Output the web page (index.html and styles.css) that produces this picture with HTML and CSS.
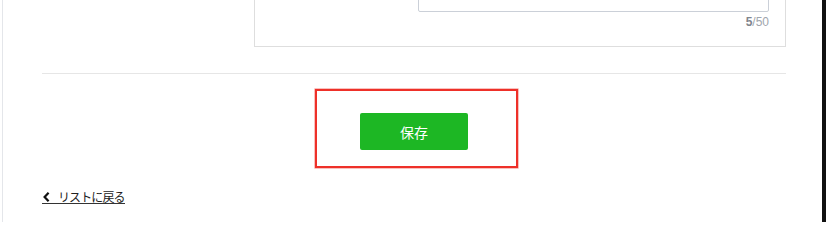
FILE: index.html
```html
<!DOCTYPE html>
<html lang="ja">
<head>
<meta charset="utf-8">
<link rel="stylesheet" href="styles.css">
</head>
<body>
<div class="page">
  <div class="main">
    <div class="card">
      <div class="field">
        <div class="input-box"></div>
        <div class="counter"><span class="count-now">5</span>/50</div>
      </div>
    </div>
    <hr class="divider">
    <div class="actions">
      <div class="action-wrap">
        <button class="save-btn" type="button">保存</button>
        <div class="highlight"></div>
      </div>
    </div>
    <div class="back">
      <a class="back-link" href="#"><svg class="chev" width="7" height="10" viewBox="0 0 7 10"><polyline points="5.6,0.8 1.6,5 5.6,9.2" fill="none" stroke="#111" stroke-width="2.2"/></svg><span class="back-text">リストに戻る</span></a>
    </div>
  </div>
  <div class="edge"></div>
</div>
</body>
</html>
```

FILE: styles.css
```css
html, body {
  margin: 0;
  padding: 0;
  background: #fff;
}
body {
  font-family: "Noto Sans CJK JP", "Noto Sans", sans-serif;
  color: #222;
}
.page {
  display: flex;
  height: 222px;
  overflow: hidden;
}
.main {
  flex: 1;
  margin-left: 2px;
  border-left: 1px solid #e4e6ea;
  padding: 0 36px 0 39px;
  display: flex;
  flex-direction: column;
}
.edge {
  width: 4px;
  background: #111;
}
.card {
  margin-top: -60px;
  margin-left: 212px;
  border: 1px solid #dedede;
  padding: 20px 16px 16px 163px;
}
.input-box {
  height: 49px;
  border: 1px solid #cbd0d8;
  border-radius: 2px;
}
.counter {
  margin-top: 2px;
  text-align: right;
  font-family: "Liberation Sans", Arial, sans-serif;
  font-size: 12px;
  line-height: 16px;
  color: #a0a5ad;
}
.count-now {
  color: #80858d;
  font-weight: bold;
}
.divider {
  margin: 26px 0 0;
  border: 0;
  border-top: 1px solid #e6e6e6;
  height: 0;
}
.actions {
  display: flex;
  justify-content: center;
  padding-top: 39px;
}
.action-wrap {
  position: relative;
}
.save-btn {
  display: block;
  width: 108px;
  height: 37px;
  border: 0;
  border-radius: 2px;
  background: #1db724;
  color: #fff;
  font-family: "Noto Sans CJK JP", sans-serif;
  font-size: 14px;
  font-weight: 400;
  padding: 0;
}
.highlight {
  position: absolute;
  left: -45px;
  top: -24px;
  width: 199px;
  height: 75px;
  border: 2px solid #ee3029;
  box-shadow: 0 0 0 0.6px rgba(238, 48, 41, 0.5);
  pointer-events: none;
}
.back {
  margin-top: 40px;
  display: flex;
}
.back-link {
  display: inline-flex;
  align-items: center;
  gap: 8px;
  color: #222;
  text-decoration: none;
  border-bottom: 1px solid #333;
  padding-left: 1px;
}
.back-text {
  font-size: 12px;
  line-height: 13px;
  letter-spacing: -0.9px;
}
.chev {
  display: block;
  margin-top: 1px;
}
```
